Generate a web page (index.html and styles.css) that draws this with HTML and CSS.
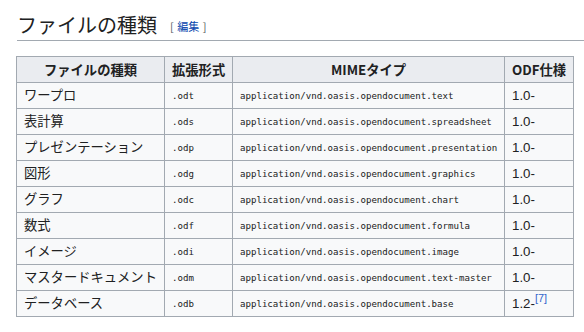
FILE: index.html
```html
<!DOCTYPE html>
<html lang="ja">
<head>
<meta charset="UTF-8">
<title>ファイルの種類</title>
<link rel="stylesheet" href="styles.css">
</head>
<body>

<h2 class="heading">ファイルの種類<span class="edit">[ <a href="#">編集</a> ]</span></h2>

<table class="wikitable">
    <tr>
        <th class="c1">ファイルの種類</th>
        <th class="c2">拡張形式</th>
        <th class="c3">MIMEタイプ</th>
        <th class="c4">ODF仕様</th>
    </tr>
    <tr><td>ワープロ</td><td><code>.odt</code></td><td><code>application/vnd.oasis.opendocument.text</code></td><td class="ver">1.0-</td></tr>
    <tr><td>表計算</td><td><code>.ods</code></td><td><code>application/vnd.oasis.opendocument.spreadsheet</code></td><td class="ver">1.0-</td></tr>
    <tr><td>プレゼンテーション</td><td><code>.odp</code></td><td><code>application/vnd.oasis.opendocument.presentation</code></td><td class="ver">1.0-</td></tr>
    <tr><td>図形</td><td><code>.odg</code></td><td><code>application/vnd.oasis.opendocument.graphics</code></td><td class="ver">1.0-</td></tr>
    <tr><td>グラフ</td><td><code>.odc</code></td><td><code>application/vnd.oasis.opendocument.chart</code></td><td class="ver">1.0-</td></tr>
    <tr><td>数式</td><td><code>.odf</code></td><td><code>application/vnd.oasis.opendocument.formula</code></td><td class="ver">1.0-</td></tr>
    <tr><td>イメージ</td><td><code>.odi</code></td><td><code>application/vnd.oasis.opendocument.image</code></td><td class="ver">1.0-</td></tr>
    <tr><td>マスタードキュメント</td><td><code>.odm</code></td><td><code>application/vnd.oasis.opendocument.text-master</code></td><td class="ver">1.0-</td></tr>
    <tr><td>データベース</td><td><code>.odb</code></td><td><code>application/vnd.oasis.opendocument.base</code></td><td class="ver">1.2-<sup><a href="#">[7]</a></sup></td></tr>
</table>

</body>
</html>
```

FILE: styles.css
```css
body {
    background-color: #fff;
    color: #202122;
    font-family: "Liberation Sans", "Noto Sans CJK JP", sans-serif;
    margin: 0;
    padding: 11px 0 0 16px;
}

.heading {
    font-family: "Noto Sans CJK JP", sans-serif;
    font-weight: normal;
    font-size: 20px;
    line-height: 27px;
    margin: 0 0 15px 1px;
    padding: 0;
    border-bottom: 1px solid #a2a9b1;
}

.edit {
    font-size: 11px;
    color: #54595d;
    margin-left: 13px;
    vertical-align: 2px;
    word-spacing: 1px;
}

.edit a {
    color: #0645ad;
    text-decoration: none;
}

.wikitable {
    border-collapse: collapse;
    background-color: #f8f9fa;
    border: 1px solid #a2a9b1;
    table-layout: fixed;
    width: 556px;
}

.wikitable th,
.wikitable td {
    border: 1px solid #a2a9b1;
    padding: 0 7px;
    height: 25px;
    line-height: 18px;
    font-size: 13.3px;
    white-space: nowrap;
}

.wikitable th {
    background-color: #eaecf0;
    font-family: "Noto Sans CJK JP", sans-serif;
    font-weight: bold;
    text-align: center;
}

.wikitable td {
    text-align: left;
}

.c1 { width: 133px; }
.c2 { width: 53px; }
.c3 { width: 257px; }
.c4 { width: 54px; }

code {
    font-family: "DejaVu Sans Mono", monospace;
    font-size: 9.1px;
}

.ver {
    font-size: 14px;
}

sup {
    font-size: 11px;
    line-height: 0;
    vertical-align: 6px;
}

sup a {
    color: #3366cc;
    text-decoration: none;
}
```
